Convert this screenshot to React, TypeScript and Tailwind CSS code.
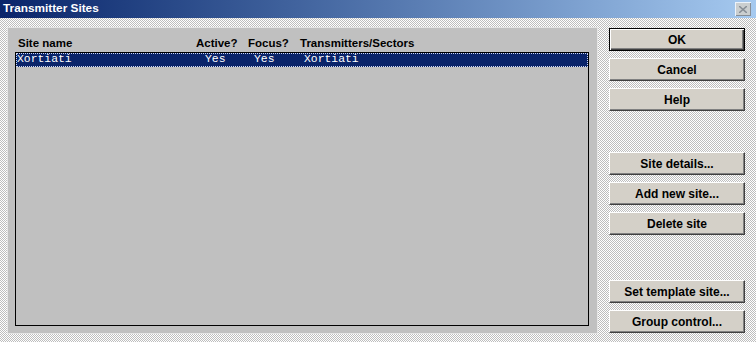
import React from 'react';

const btn =
  'flex h-[23px] w-[136px] items-center justify-center bg-[#d4d0c8] text-[12px] font-bold text-black border border-t-white border-l-white border-r-[#404040] border-b-[#404040] shadow-[inset_-1px_-1px_#808080]';

function Btn({ label, primary = false }: { label: string; primary?: boolean }) {
  if (primary) {
    return (
      <div className="h-[23px] w-[136px] border border-black">
        <div className="flex h-full w-full items-center justify-center bg-[#d4d0c8] text-[12px] font-bold text-black shadow-[inset_1px_1px_#ffffff,inset_-1px_-1px_#404040,inset_-2px_-2px_#808080]">
          {label}
        </div>
      </div>
    );
  }
  return <div className={btn}>{label}</div>;
}

export default function App() {
  return (
    <div
      className="flex h-[342px] w-[756px] flex-col overflow-hidden bg-[repeating-conic-gradient(#ffffff_0_25%,#bdbdbd_0_50%)] bg-[length:2px_2px]"
      style={{ fontFamily: '"Liberation Sans", Arial, sans-serif' }}
    >
      {/* title bar */}
      <div className="flex h-[18px] shrink-0 items-center justify-between bg-gradient-to-r from-[#0a246a] to-[#a6caf0] pl-[3px] pr-[5px]">
        <span className="text-[11.8px] font-bold leading-none text-white">Transmitter Sites</span>
        <div className="flex h-[14px] w-[16px] items-center justify-center bg-[#d4d0c8] opacity-80 shadow-[inset_1px_1px_#ffffff,inset_-1px_-1px_#808080]">
          <svg width="8" height="7" viewBox="0 0 8 7">
            <path d="M0 0 L8 7 M8 0 L0 7" stroke="#808080" strokeWidth="1.5" />
          </svg>
        </div>
      </div>

      <div className="flex flex-1">
        {/* list panel */}
        <div className="ml-[7px] mt-[9px] flex h-[307px] w-[591px] flex-col border border-[#e4e4e4] bg-[#c0c0c0] pl-[7px]">
          <div className="mt-[7px] flex h-[14px] items-end text-[11.5px] font-bold leading-none text-black">
            <span className="ml-[3px] w-[178px]">Site name</span>
            <span className="w-[52px]">Active?</span>
            <span className="w-[52px]">Focus?</span>
            <span>Transmitters/Sectors</span>
          </div>
          <div className="mt-[3px] h-[274px] w-[574px] border border-black">
            <div
              className="flex h-[14px] items-center border border-dotted border-[#d0d8f0] bg-[#0a246a] text-[11.4px] leading-none text-white"
              style={{ fontFamily: '"Liberation Mono", "Courier New", monospace' }}
            >
              <span className="w-[188px]">Xortiati</span>
              <span className="w-[49px]">Yes</span>
              <span className="w-[50px]">Yes</span>
              <span>Xortiati</span>
            </div>
          </div>
        </div>

        {/* buttons */}
        <div className="ml-[11px] mt-[10px] flex flex-col">
          <div className="flex flex-col gap-[7px]">
            <Btn label="OK" primary />
            <Btn label="Cancel" />
            <Btn label="Help" />
          </div>
          <div className="mt-[41px] flex flex-col gap-[7px]">
            <Btn label="Site details..." />
            <Btn label="Add new site..." />
            <Btn label="Delete site" />
          </div>
          <div className="mt-[45px] flex flex-col gap-[7px]">
            <Btn label="Set template site..." />
            <Btn label="Group control..." />
          </div>
        </div>
      </div>
    </div>
  );
}
